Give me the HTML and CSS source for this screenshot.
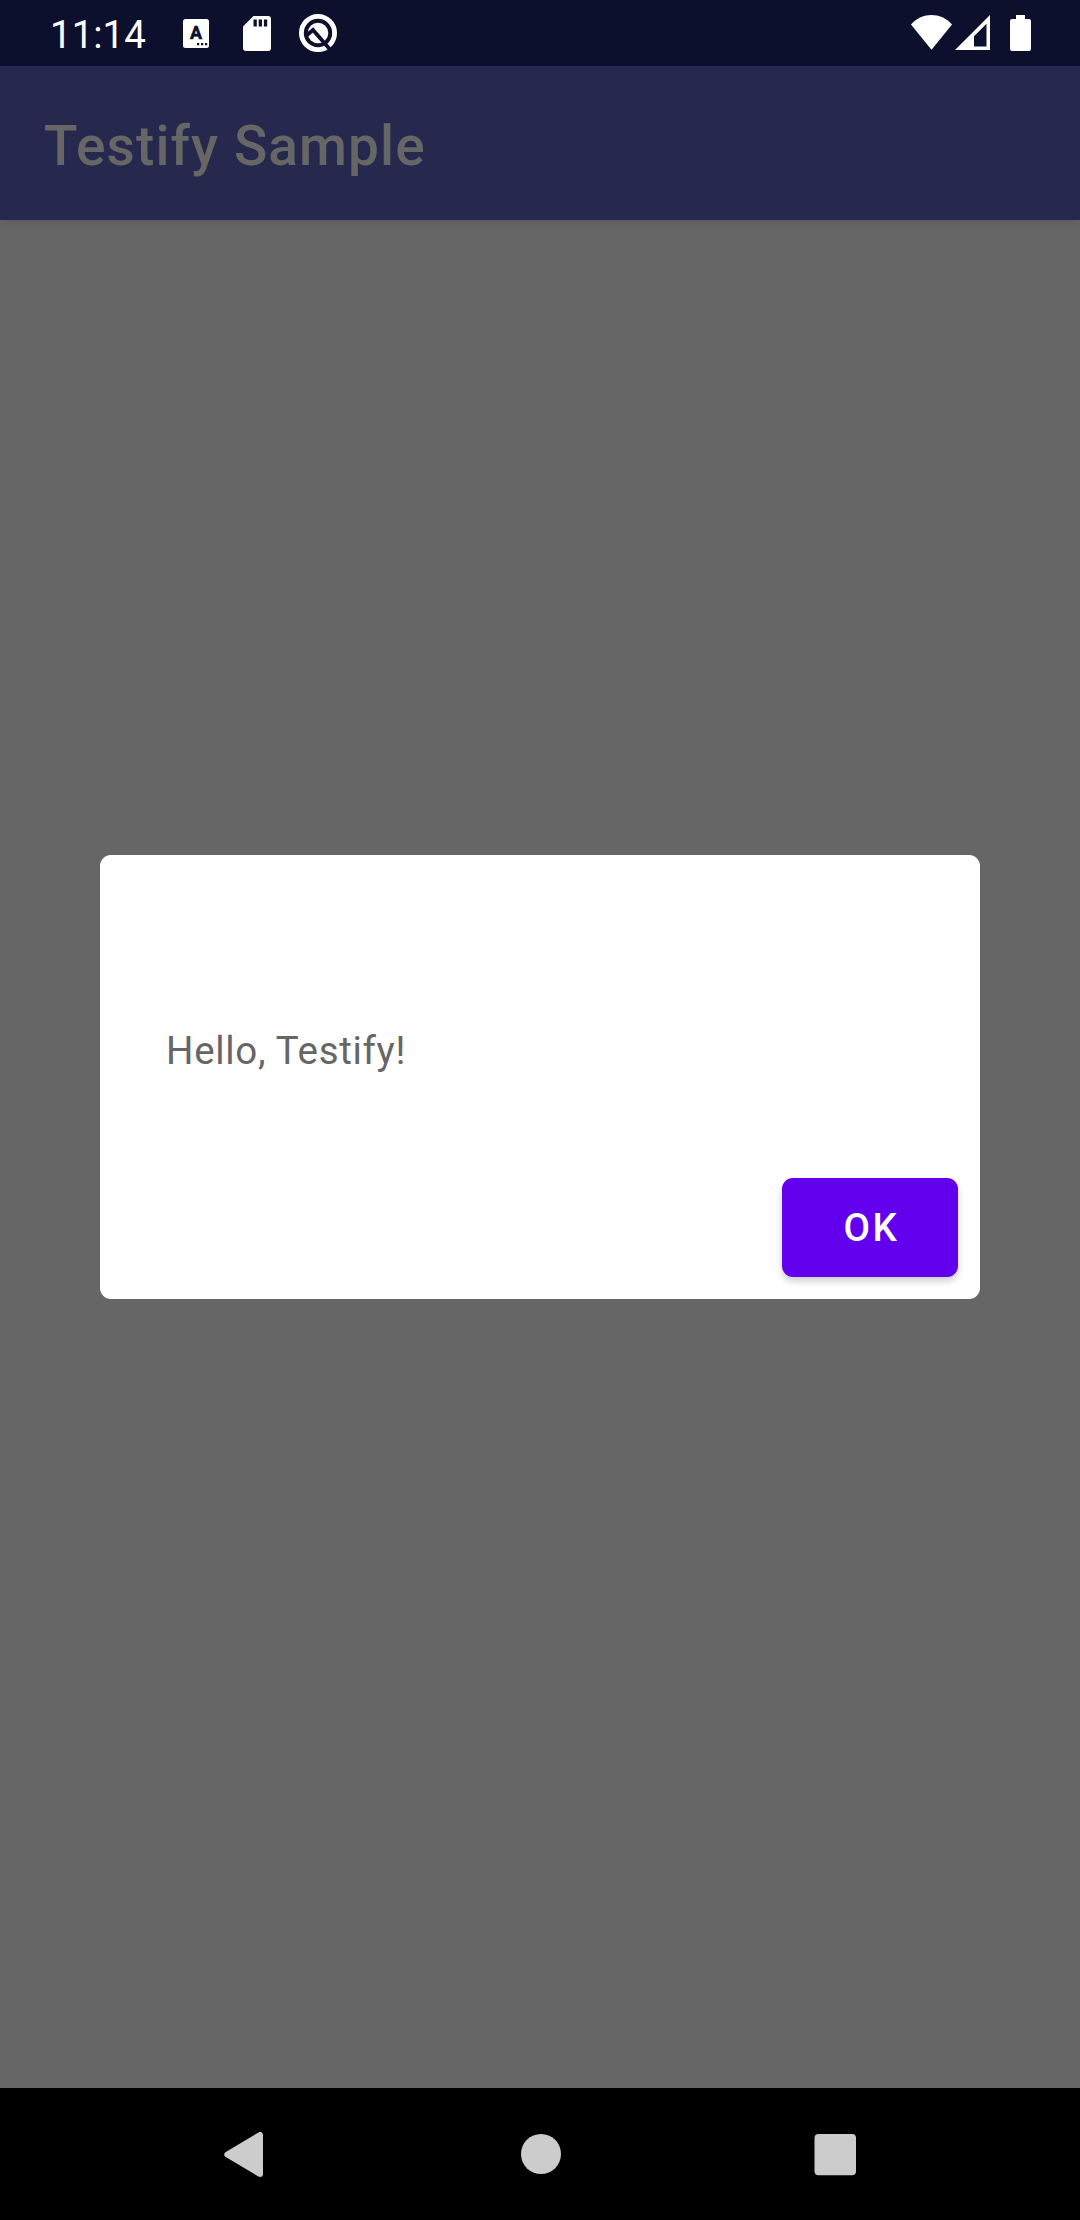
FILE: index.html
```html
<!DOCTYPE html>
<html lang="en">
<head>
<meta charset="utf-8">
<title>Testify Sample</title>
<link rel="stylesheet" href="styles.css">
</head>
<body>
<div class="screen">
  <header class="status-bar">
    <span class="clock">11:14</span>
    <div class="notifications">
      <svg class="icon-input" viewBox="0 0 26 29">
        <rect width="26" height="29" rx="2.5" fill="#fff"/>
        <text class="input-letter" x="13" y="20.3" text-anchor="middle">A</text>
        <path d="M14 24h2.2v2.2H14zM18 24h2.2v2.2H18zM22 24h2.2v2.2H22z" fill="#0c102d"/>
      </svg>
      <svg class="icon-sd" viewBox="0 0 28 35">
        <path d="M10.500 0H25a3 3 0 0 1 3 3V32a3 3 0 0 1-3 3H3a3 3 0 0 1-3-3V10.500z" fill="#fff"/>
        <path d="M10.500 3.500h3.300v7h-3.300zM15.700 3.500h3.300v7h-3.300zM20.900 3.500h3.300v7h-3.300z" fill="#0c102d"/>
      </svg>
      <svg class="icon-q" viewBox="0 0 38 38">
        <circle cx="19" cy="19" r="16.600" fill="none" stroke="#fff" stroke-width="4.800"/>
        <circle cx="19" cy="19" r="10.300" fill="#fff"/>
        <path d="M7.500 21.500L14 16L31.500 36" fill="none" stroke="#0c102d" stroke-width="3.800"/>
      </svg>
    </div>
    <div class="system">
      <svg class="icon-wifi" viewBox="0 0 41 35">
        <path d="M0 9.500C11.500-3.100 29.500-3.100 41 9.500L20.500 34.700z" fill="#fff"/>
      </svg>
      <svg class="icon-signal" viewBox="0 0 35 35">
        <path d="M35 0V35H0zM31.500 8.800L19 21.300V31.500H31.500z" fill="#fff" fill-rule="evenodd"/>
      </svg>
      <svg class="icon-battery" viewBox="0 0 21 36">
        <path d="M6 0h9v4h4a2 2 0 0 1 2 2v28a2 2 0 0 1-2 2H2a2 2 0 0 1-2-2V6a2 2 0 0 1 2-2h4z" fill="#fff"/>
      </svg>
    </div>
  </header>
  <div class="app-bar"><h1 class="title">Testify Sample</h1></div>
  <main class="content">
    <section class="dialog" role="dialog">
      <p class="message">Hello, Testify!</p>
      <button class="ok" type="button">OK</button>
    </section>
  </main>
  <nav class="nav-bar">
    <svg class="nav-icon" viewBox="0 0 48 48">
      <path d="M5.300 24.500L38 5V44z" fill="#ccc" stroke="#ccc" stroke-width="6" stroke-linejoin="round"/>
    </svg>
    <svg class="nav-icon" viewBox="0 0 48 48"><circle cx="24" cy="24" r="20" fill="#ccc"/></svg>
    <svg class="nav-icon" viewBox="0 0 48 48"><rect x="3.500" y="4" width="41.500" height="41.300" rx="4" fill="#ccc"/></svg>
  </nav>
</div>
</body>
</html>
```
FILE: styles.css
```css
body {
  margin: 0;
  font-family: Roboto, sans-serif;
}

svg {
  display: block;
}

.screen {
  display: flex;
  flex-direction: column;
  width: 1080px;
  height: 2220px;
  background: #666;
}

.status-bar {
  display: flex;
  box-sizing: border-box;
  height: 66px;
  padding: 0 49px 0 50px;
  background: #0c102d;
  color: #fff;
}

.clock {
  width: 133px;
  padding-top: 4px;
  font-size: 38.5px;
  line-height: 62px;
}

.notifications,
.system {
  display: flex;
  align-items: flex-start;
}

.system {
  margin-left: auto;
}

.icon-input {
  width: 26px;
  height: 29px;
  margin-top: 19px;
}

.input-letter {
  font: 700 18px Roboto, sans-serif;
  fill: #0c102d;
  stroke: #0c102d;
  stroke-width: 0.6;
  stroke-linejoin: round;
}

.icon-sd {
  width: 28px;
  height: 35px;
  margin: 16px 0 0 34px;
}

.icon-q {
  width: 38px;
  height: 38px;
  margin: 14px 0 0 28px;
}

.icon-wifi {
  width: 41px;
  height: 35px;
  margin-top: 15px;
}

.icon-signal {
  width: 35px;
  height: 35px;
  margin: 15px 0 0 3px;
}

.icon-battery {
  width: 21px;
  height: 36px;
  margin: 15px 0 0 20px;
}

.app-bar {
  box-sizing: border-box;
  height: 154px;
  padding: 6px 44px 0;
  background: #26294d;
  box-shadow: 0 2px 8px rgba(0, 0, 0, 0.12);
}

.title {
  margin: 0;
  color: #666;
  font-size: 55px;
  font-weight: 500;
  line-height: 148px;
  letter-spacing: 0.02em;
}

.content {
  flex: 1;
  padding: 635px 100px 0;
}

.dialog {
  display: flex;
  flex-direction: column;
  box-sizing: border-box;
  height: 444px;
  padding: 170px 22px 22px 66px;
  border-radius: 11px;
  background: #fff;
}

.message {
  margin: 0;
  color: #666;
  font-size: 38.5px;
  line-height: 52px;
  letter-spacing: 0.0178em;
}

.ok {
  align-self: flex-end;
  width: 176px;
  height: 99px;
  margin-top: auto;
  padding: 0 0 0 3px;
  border: 0;
  border-radius: 11px;
  background: #6200ee;
  box-shadow: 0 4px 7px rgba(0, 0, 0, 0.2);
  color: #fff;
  font: 500 38.5px/99px Roboto, sans-serif;
  letter-spacing: 0.07em;
}

.nav-bar {
  display: flex;
  justify-content: space-between;
  align-items: center;
  height: 132px;
  padding: 0 221px 0 222px;
  background: #000;
}

.nav-icon {
  width: 48px;
  height: 48px;
}
```
